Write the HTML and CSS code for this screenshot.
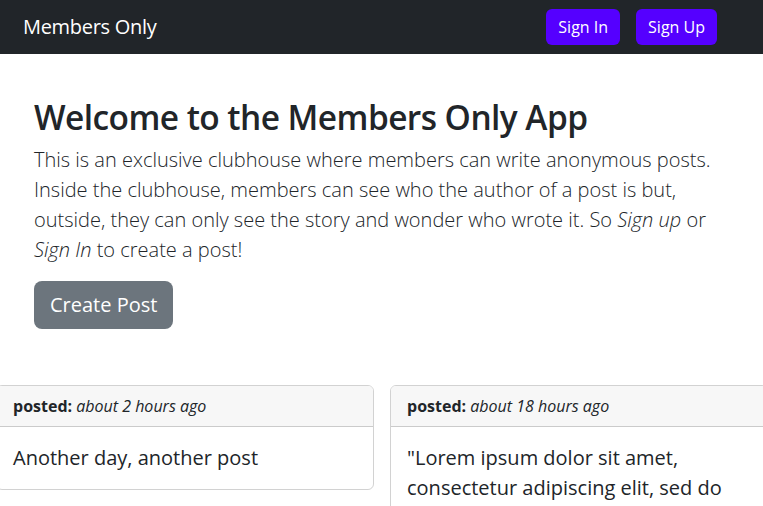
FILE: index.html
```html
<!DOCTYPE html>
<html lang="en">
<head>
<meta charset="utf-8">
<title>Members Only</title>
<link rel="stylesheet" href="styles.css">
</head>
<body>
<div class="page">
  <nav class="navbar">
    <a class="brand" href="#">Members Only</a>
    <div class="nav-actions">
      <a class="btn btn-primary" href="#">Sign In</a>
      <a class="btn btn-primary" href="#">Sign Up</a>
    </div>
  </nav>
  <section class="hero">
    <h1>Welcome to the Members Only App</h1>
    <p class="lead">This is an exclusive clubhouse where members can write anonymous posts. Inside the clubhouse, members can see who the author of a post is but, outside, they can only see the story and wonder who wrote it. So <em>Sign up</em> or <em>Sign In</em> to create a post!</p>
    <a class="btn btn-lg btn-secondary" href="#">Create Post</a>
  </section>
  <section class="posts">
    <article class="card">
      <header class="card-header"><strong>posted:</strong> <em>about 2 hours ago</em></header>
      <div class="card-body"><p>Another day, another post</p></div>
    </article>
    <article class="card">
      <header class="card-header"><strong>posted:</strong> <em>about 18 hours ago</em></header>
      <div class="card-body"><p>"Lorem ipsum dolor sit amet, consectetur adipiscing elit, sed do eiusmod tempor incididunt ut labore et dolore magna aliqua."</p></div>
    </article>
  </section>
</div>
</body>
</html>
```
FILE: styles.css
```css
* { box-sizing: border-box; }
html, body { margin: 0; padding: 0; }
body {
  font-family: "Open Sans", "Noto Sans", sans-serif;
  font-size: 16px;
  line-height: 1.5;
  color: #212529;
  background: #fff;
}
.page { overflow: hidden; width: 763px; height: 506px; }
a { text-decoration: none; }

.navbar {
  height: 54px;
  background: #212529;
  display: flex;
  align-items: center;
  justify-content: space-between;
  padding: 0 46px 0 23px;
}
.brand { color: #fff; font-size: 20px; line-height: 30px; letter-spacing: -0.3px; }
.nav-actions { display: flex; gap: 16px; }

.btn {
  display: inline-block;
  border-radius: 6px;
  color: #fff;
  font-size: 16px;
  line-height: 24px;
  padding: 6px 12px;
}
.btn-primary { background: #5500ff; }
.btn-secondary { background: #6c757d; }
.btn-lg { font-size: 20px; line-height: 30px; padding: 9px 16px; border-radius: 8px; }

.hero { padding: 43px 34px 56px; }
.hero h1 {
  margin: 0 0 8px;
  font-size: 33.45px;
  font-weight: 600;
  letter-spacing: -0.55px;
  line-height: 1.2;
}
.lead {
  margin: 0 0 16px;
  font-size: 20px;
  font-weight: 300;
  line-height: 30px;
}

.posts {
  display: grid;
  grid-template-columns: 378px 378px;
  gap: 16px;
  margin-left: -4px;
  align-items: start;
}
.card {
  border: 1px solid rgba(0,0,0,.175);
  border-radius: 6px;
  overflow: hidden;
}
.card-header {
  background: #f7f7f7;
  border-bottom: 1px solid rgba(0,0,0,.175);
  padding: 8px 16px;
  line-height: 24px;
}
.card-header strong { font-weight: 700; }
.card-body { padding: 16px; }
.card-body p { margin: 0; font-size: 20px; line-height: 30px; }
```
